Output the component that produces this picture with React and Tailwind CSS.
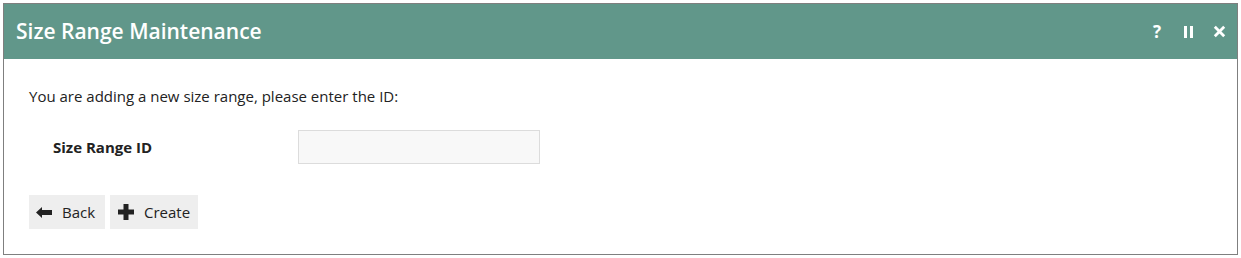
import React from "react";

function ArrowLeft() {
  return (
    <svg width="16" height="11" viewBox="0 0 16 11" className="shrink-0">
      <path d="M0 5.5 L6 0 L6 3 L16 3 L16 8 L6 8 L6 11 Z" fill="#222" />
    </svg>
  );
}

function Plus() {
  return (
    <svg width="16" height="16" viewBox="0 0 16 16" className="shrink-0">
      <path d="M5.5 0 H10.5 V5.5 H16 V10.5 H10.5 V16 H5.5 V10.5 H0 V5.5 H5.5 Z" fill="#222" />
    </svg>
  );
}

export default function App() {
  return (
    <div className="w-[1241px] h-[258px] bg-white pt-[3px] pl-[3px]" style={{ fontFamily: '"Open Sans", sans-serif' }}>
      <div className="w-[1235px] h-[252px] border border-[#7f7f7f] flex flex-col">
        <div className="h-[55px] bg-[#61978a] flex items-center justify-between pl-[12px] pr-[11px]">
          <div className="text-white text-[21px] font-semibold leading-none pb-[1px]">Size Range Maintenance</div>
          <div className="flex items-center text-white font-bold">
            <span className="text-[17px] leading-none w-[10px] text-center">?</span>
            <span className="flex gap-[3px] items-center ml-[22px]">
              <span className="w-[3px] h-[12px] bg-white"></span>
              <span className="w-[3px] h-[12px] bg-white"></span>
            </span>
            <svg width="13" height="13" viewBox="0 0 13 13" className="ml-[20px]">
              <path d="M1.8 1.8 L11.2 11.2 M11.2 1.8 L1.8 11.2" stroke="white" strokeWidth="2.8" strokeLinecap="butt" />
            </svg>
          </div>
        </div>
        <div className="pl-[25px] pt-[26px]">
          <div className="text-[15px] text-[#222] leading-[22px]">You are adding a new size range, please enter the ID:</div>
          <div className="flex items-center mt-[23px]">
            <div className="w-[269px] pl-[24px] text-[15px] font-bold text-[#222]">Size Range ID</div>
            <input className="w-[242px] h-[34px] bg-[#f8f8f8] border border-[#dcdcdc] outline-none" />
          </div>
          <div className="flex gap-[5px] mt-[31px]">
            <button className="h-[34px] w-[76px] bg-[#eeeeee] flex items-center pl-[7px] gap-[10px] text-[15px] text-[#222]">
              <ArrowLeft />
              <span>Back</span>
            </button>
            <button className="h-[34px] w-[88px] bg-[#eeeeee] flex items-center pl-[8px] gap-[10px] text-[15px] text-[#222]">
              <Plus />
              <span>Create</span>
            </button>
          </div>
        </div>
      </div>
    </div>
  );
}
